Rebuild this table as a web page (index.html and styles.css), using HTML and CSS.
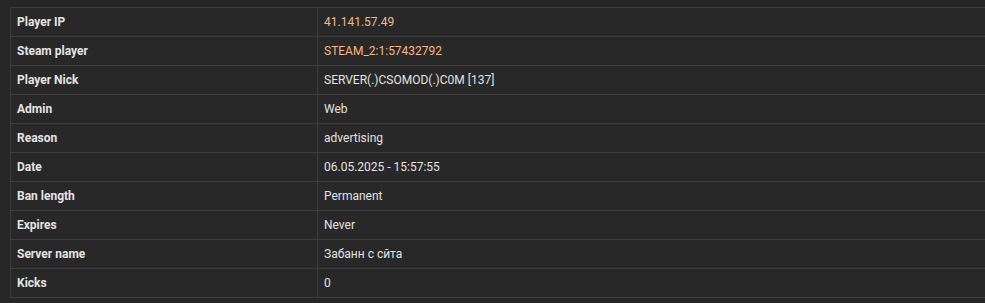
FILE: index.html
```html
<!DOCTYPE html>
<html>
<head>
<meta charset="utf-8">
<link rel="stylesheet" href="styles.css">
</head>
<body>
<div class="wrap">
<table class="info">
<tr><th>Player IP</th><td class="hl">41.141.57.49</td></tr>
<tr><th>Steam player</th><td class="hl">STEAM_2:1:57432792</td></tr>
<tr><th>Player Nick</th><td>SERVER(.)CSOMOD(.)C0M [137]</td></tr>
<tr><th>Admin</th><td>Web</td></tr>
<tr><th>Reason</th><td>advertising</td></tr>
<tr><th>Date</th><td>06.05.2025 - 15:57:55</td></tr>
<tr><th>Ban length</th><td>Permanent</td></tr>
<tr><th>Expires</th><td>Never</td></tr>
<tr><th>Server name</th><td>Забанн с сйта</td></tr>
<tr><th>Kicks</th><td>0</td></tr>
</table>
</div>
</body>
</html>
```
FILE: styles.css
```css
html, body {
  margin: 0;
  padding: 0;
  background: #262626;
  overflow: hidden;
}
.wrap {
  padding: 7px 0 0 10px;
  width: 1000px;
}
.info {
  border-collapse: collapse;
  width: 100%;
  font-family: Roboto, "Noto Sans", sans-serif;
  font-size: 12px;
  color: #e2e2e2;
  background: #282828;
}
.info th, .info td {
  border: 1px solid #3d3d3d;
  height: 29px;
  padding: 0 0 0 6px;
  text-align: left;
  vertical-align: middle;
  box-sizing: border-box;
}
.info th {
  width: 307px;
  font-weight: bold;
  color: #e4e4e4;
}
.info td.hl {
  color: #f0b88c;
}
```
